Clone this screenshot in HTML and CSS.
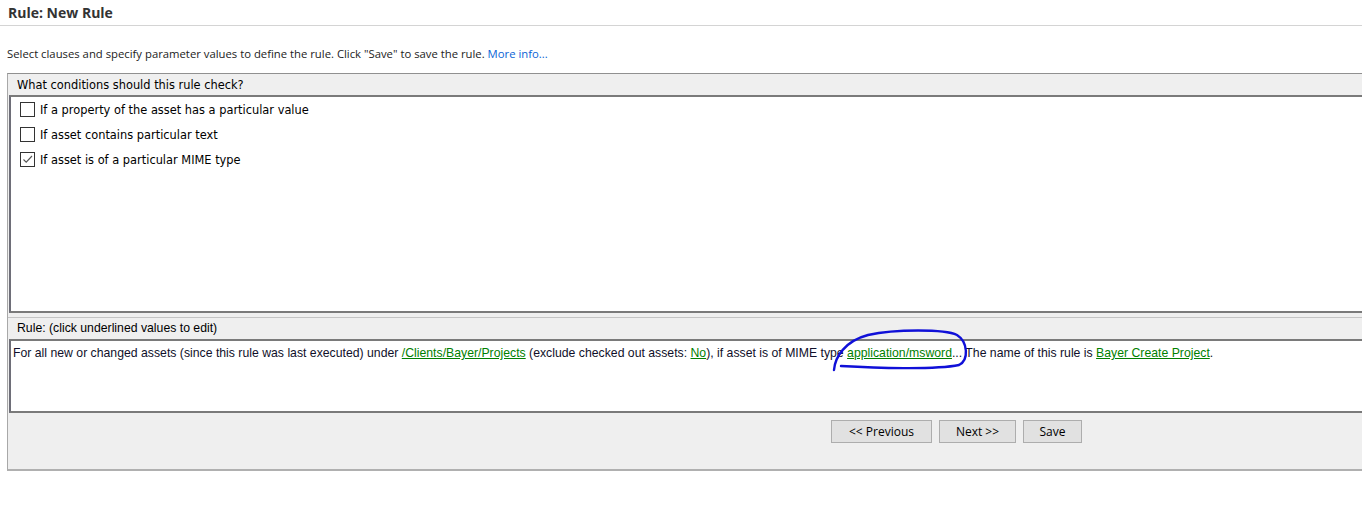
FILE: index.html
```html
<!DOCTYPE html>
<html lang="en">
    <head>
        <meta charset="UTF-8" />
        <title>Rule: New Rule</title>
        <link rel="stylesheet" href="styles.css">
    </head>
    <body>
        <div class="page-title">Rule: New Rule</div>
        <p class="intro">Select clauses and specify parameter values to define the rule. Click "Save" to save the rule. <a href="#">More info...</a></p>

        <div class="wizard">
            <div class="section-head">What conditions should this rule check?</div>
            <div class="panel conditions">
                <label class="cond"><span class="box"></span>If a property of the asset has a particular value</label>
                <label class="cond"><span class="box"></span>If asset contains particular text</label>
                <label class="cond"><span class="box checked">
                    <svg width="13" height="13" viewBox="0 0 13 13"><path d="M2.5 6.5 L5.2 9.2 L11 3" fill="none" stroke="#555" stroke-width="1.1"/></svg>
                </span>If asset is of a particular MIME type</label>
            </div>

            <div class="section-head second">Rule: (click underlined values to edit)</div>
            <div class="panel rule">
                For all new or changed assets (since this rule was last executed) under <a href="#">/Clients/Bayer/Projects</a> (exclude checked out assets: <a href="#">No</a>), if asset is of MIME type <a href="#">application/msword</a>... The name of this rule is <a href="#">Bayer Create Project</a>.
            </div>

            <div class="buttons">
                <button>&lt;&lt; Previous</button>
                <button>Next &gt;&gt;</button>
                <button>Save</button>
            </div>
        </div>

        <!-- pen mark from the original capture -->
        <svg class="scribble" width="1362" height="518" viewBox="0 0 1362 518">
            <path d="M834 370 C 835 357, 845 341, 868 335 C 895 329, 945 329, 957 335 C 968 342, 969 360, 959 365 C 935 370, 875 368, 841 366" fill="none" stroke="#1010d8" stroke-width="2.4" stroke-linecap="round"/>
        </svg>
    </body>
</html>
```

FILE: styles.css
```css
body {
    margin: 0;
    padding: 0;
    background: #fff;
    overflow: hidden;
    font-family: "Open Sans", "Noto Sans", sans-serif;
    color: #222;
}
.page-title {
    font-weight: bold;
    font-size: 14px;
    color: #333;
    padding: 3px 8px 0 8px;
    height: 22px;
    border-bottom: 1px solid #d4d4d4;
}
.intro {
    font-size: 11.3px;
    margin: 20px 0 0 7px;
    height: 27px;
    color: #222;
}
.intro a {
    color: #0a64d6;
    text-decoration: none;
}
.wizard {
    margin-left: 7px;
    width: 1400px;
    height: 395px;
    background: #efefef;
    border-top: 1px solid #909090;
    border-left: 1px solid #a8a8a8;
    border-bottom: 2px solid #b0b0b0;
    font-family: "DejaVu Sans", Tahoma, sans-serif;
}
.section-head {
    font-size: 11.4px;
    height: 21px;
    line-height: 22px;
    padding-left: 9px;
    color: #000;
}
.section-head.second {
    margin-top: 4px;
    border-top: 1px solid #c4c4c4;
    line-height: 20px;
    font-family: "Liberation Sans", Arial, sans-serif;
    font-size: 12.25px;
}
.panel {
    margin-left: 1px;
    background: #fff;
    border-top: 2px solid #7a7a7a;
    border-left: 2px solid #6e6e78;
    border-bottom: 2px solid #7a7a7a;
}
.conditions {
    height: 214px;
    padding: 0 0 0 9px;
}
.cond {
    display: flex;
    align-items: center;
    height: 25px;
    font-size: 11.4px;
    color: #000;
}
.box {
    width: 13px;
    height: 13px;
    border: 1px solid #333;
    background: #fff;
    margin-right: 5px;
    display: flex;
}
.rule {
    height: 65px;
    padding: 5px 0 0 2px;
    font-family: "Liberation Sans", Arial, sans-serif;
    font-size: 12.25px;
    color: #10102a;
    line-height: 14px;
}
.rule a {
    color: #008000;
    text-decoration: underline;
}
.buttons {
    display: flex;
    gap: 7px;
    padding: 7px 0 0 823px;
}
.buttons button {
    font-family: "Open Sans", "Noto Sans", sans-serif;
    font-size: 12px;
    height: 23px;
    padding: 0 14px;
    background: #e1e1e1;
    border: 1px solid #adadad;
    color: #000;
    border-radius: 0;
}
.buttons button:first-child {
    width: 101px;
}
.buttons button:nth-child(2) {
    width: 77px;
}
.buttons button:nth-child(3) {
    width: 59px;
}
.scribble {
    position: absolute;
    left: 0;
    top: 0;
    pointer-events: none;
}
```
